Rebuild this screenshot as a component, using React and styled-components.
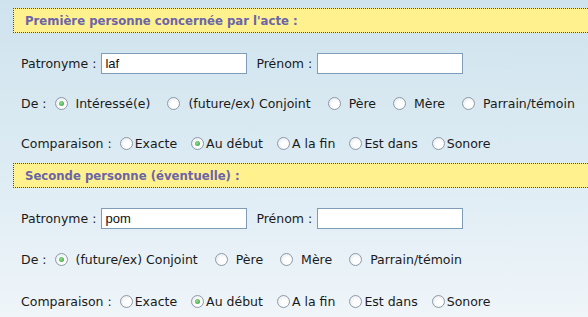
import React from 'react';
import styled, { createGlobalStyle } from 'styled-components';

const GlobalStyle = createGlobalStyle`
  html, body {
    margin: 0;
    padding: 0;
    height: 100%;
    overflow: hidden;
  }
  body {
    background: linear-gradient(to bottom, #cfe3ee 0%, #dcebf3 50%, #eff5f9 100%);
    font-family: "DejaVu Sans", Verdana, sans-serif;
    font-size: 12.5px;
    color: #1a1a1a;
  }
`;

const Page = styled.div`
  padding: 8px 0 0 13px;
`;

const Section = styled.section`
  display: flex;
  flex-direction: column;
`;

const Header = styled.div`
  height: 23px;
  display: flex;
  align-items: center;
  margin-right: -10px;
  padding-left: 11px;
  background: #fff18e;
  border: 1px dotted #5a4a20;
  color: #6b64a8;
  font-weight: bold;
  font-size: 11.7px;
`;

const Spacer = styled.div`
  height: ${p => p.h}px;
`;

const Row = styled.div`
  display: flex;
  align-items: center;
  height: ${p => p.h || 40}px;
  padding-left: 8px;
  white-space: nowrap;
`;

const Label = styled.span`
  margin-right: ${p => p.gap || 5}px;
`;

const TextInput = styled.input`
  box-sizing: border-box;
  width: 146px;
  height: 21px;
  padding: 1px 3px;
  border: 1px solid #7f9db9;
  background: #fff;
  font-family: "Liberation Sans", Arial, sans-serif;
  font-size: 13px;
  color: #111;
  margin-right: 9px;
  outline: none;
`;

const Choice = styled.label`
  display: inline-flex;
  align-items: center;
  gap: ${p => p.gap}px;
  margin-right: ${p => p.space}px;
`;

const Radio = styled.input.attrs({ type: 'radio' })`
  appearance: none;
  margin: 0;
  width: 13px;
  height: 13px;
  border-radius: 50%;
  border: 1px solid #8d9aa8;
  background: radial-gradient(circle at 60% 60%, #ffffff 30%, #dfe3e8 100%);
  box-sizing: border-box;
  position: relative;
  &:checked::after {
    content: "";
    position: absolute;
    left: 3px;
    top: 3px;
    width: 5px;
    height: 5px;
    border-radius: 50%;
    background: radial-gradient(circle at 40% 40%, #8fe08f, #2e9a2e);
  }
`;

const RadioGroup = ({ name, options, checked, gap, space }) => (
  <>
    {options.map(o => (
      <Choice key={o} gap={gap} space={space}>
        <Radio name={name} defaultChecked={o === checked} />
        {o}
      </Choice>
    ))}
  </>
);

const Person = ({ id, title, patronyme, deOptions, deChecked, deRow }) => (
  <Section>
    <Header>{title}</Header>
    <Spacer h={10} />
    <Row>
      <Label>Patronyme :</Label>
      <TextInput defaultValue={patronyme} />
      <Label>Prénom :</Label>
      <TextInput defaultValue="" />
    </Row>
    <Row h={deRow}>
      <Label gap={8}>De :</Label>
      <RadioGroup name={id + '-de'} options={deOptions} checked={deChecked} gap={8} space={17} />
    </Row>
    <Row>
      <Label gap={8}>Comparaison :</Label>
      <RadioGroup
        name={id + '-cmp'}
        options={['Exacte', 'Au début', 'A la fin', 'Est dans', 'Sonore']}
        checked="Au début"
        gap={2}
        space={14}
      />
    </Row>
  </Section>
);

export default function App() {
  return (
    <Page>
      <GlobalStyle />
      <Person
        id="p1"
        title="Première personne concernée par l'acte :"
        patronyme="laf"
        deOptions={['Intéressé(e)', '(future/ex) Conjoint', 'Père', 'Mère', 'Parrain/témoin']}
        deChecked="Intéressé(e)"
      />
      <Person
        id="p2"
        title="Seconde personne (éventuelle) :"
        patronyme="pom"
        deOptions={['(future/ex) Conjoint', 'Père', 'Mère', 'Parrain/témoin']}
        deChecked="(future/ex) Conjoint"
        deRow={43}
      />
    </Page>
  );
}
